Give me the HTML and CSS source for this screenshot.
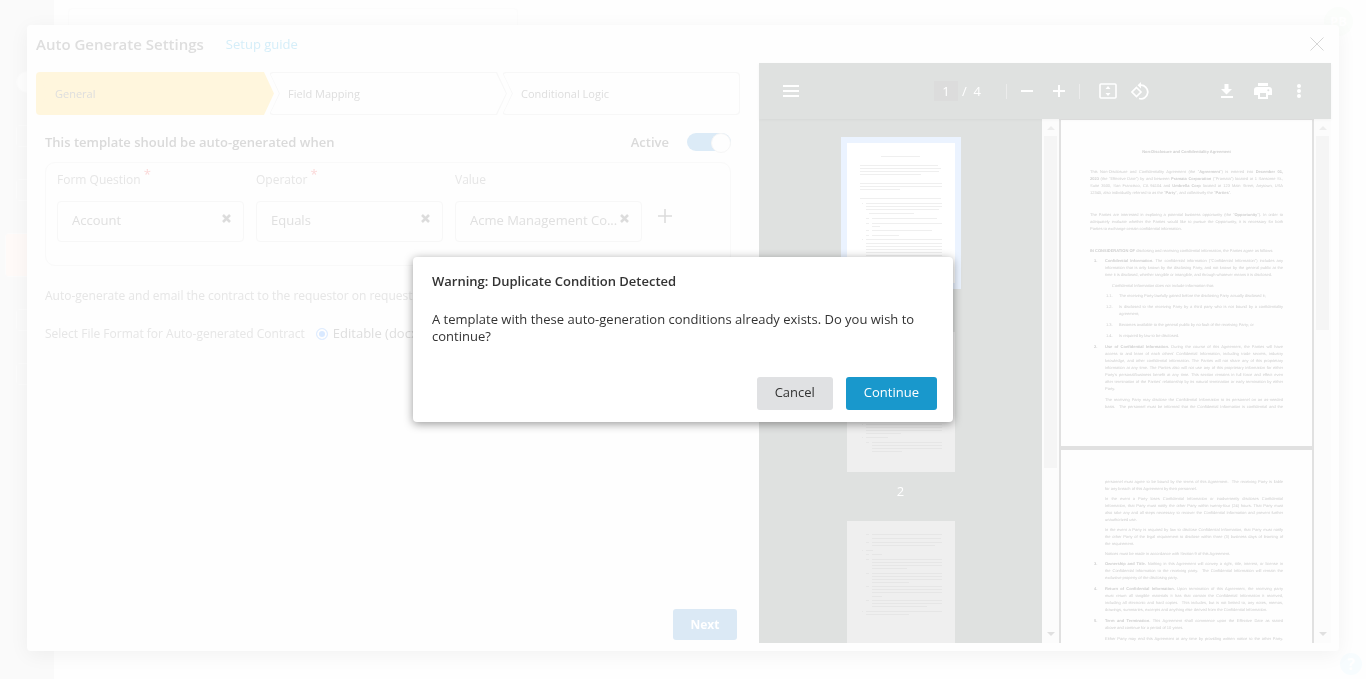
FILE: index.html
```html
<!DOCTYPE html>
<html lang="en">
<head>
    <meta charset="UTF-8">
    <meta name="viewport" content="width=device-width, initial-scale=1.0">
    <title>Auto Generate Settings</title>
    <link rel="stylesheet" href="styles.css">
</head>
<body>
    <!-- Page behind the modal -->
    <nav class="sidebar">
        <span class="side-icon round"></span>
        <span class="side-icon"></span>
        <span class="side-icon"></span>
        <span class="side-icon current"></span>
        <span class="side-icon"></span>
        <span class="side-icon"></span>
    </nav>
    <div class="search-bar"></div>
    <span class="avatar">PB</span>
    <button class="help" aria-label="Help">?</button>

    <div class="modal">
        <header class="modal-header">
            <h1>Auto Generate Settings</h1>
            <a href="#">Setup guide</a>
            <button class="close" aria-label="Close">
                <svg width="14" height="14" viewBox="0 0 14 14"><path d="M.5.5l13 13M13.5.5l-13 13" stroke="#d6d6d6" fill="none"/></svg>
            </button>
        </header>

        <div class="modal-body">
            <form class="settings" onsubmit="return false">
                <div class="steps">
                    <button type="button" class="step first active">General</button>
                    <button type="button" class="step">Field Mapping</button>
                    <button type="button" class="step last">Conditional Logic</button>
                </div>

                <div class="active-row">
                    <h2>This template should be auto-generated when</h2>
                    <label for="active">Active</label>
                    <input type="checkbox" class="toggle" id="active" checked>
                </div>

                <div class="conditions">
                    <div class="field">
                        <label for="question">Form Question <sup>*</sup></label>
                        <div class="select-box">
                            <select id="question"><option>Account</option></select>
                            <button type="button" class="clear" aria-label="Clear question"><svg width="9" height="9" viewBox="0 0 9 9"><path d="M1 1l7 7M8 1l-7 7"/></svg></button>
                        </div>
                    </div>
                    <div class="field">
                        <label for="operator">Operator <sup>*</sup></label>
                        <div class="select-box">
                            <select id="operator"><option>Equals</option></select>
                            <button type="button" class="clear" aria-label="Clear operator"><svg width="9" height="9" viewBox="0 0 9 9"><path d="M1 1l7 7M8 1l-7 7"/></svg></button>
                        </div>
                    </div>
                    <div class="field">
                        <label for="value">Value</label>
                        <div class="select-box">
                            <select id="value"><option>Acme Management Co...</option></select>
                            <button type="button" class="clear" aria-label="Clear value"><svg width="9" height="9" viewBox="0 0 9 9"><path d="M1 1l7 7M8 1l-7 7"/></svg></button>
                        </div>
                    </div>
                    <button type="button" class="add" aria-label="Add condition">
                        <svg width="14" height="14" viewBox="0 0 14 14"><path d="M7 0v14M0 7h14" stroke="#dcdcdc" stroke-width="1.6"/></svg>
                    </button>
                </div>

                <p class="option-row">Auto-generate and email the contract to the requestor on request submission</p>
                <div class="option-row format-row">
                    <span>Select File Format for Auto-generated Contract</span>
                    <input type="radio" name="format" id="docx" checked>
                    <label for="docx">Editable (docx)</label>
                </div>

                <button type="button" class="next">Next</button>
            </form>

            <section class="viewer">
                <div class="toolbar">
                    <div class="tools">
                        <button aria-label="Menu"><svg width="16" height="12" viewBox="0 0 16 12"><path d="M0 1h16M0 6h16M0 11h16" stroke="#fff" stroke-width="2"/></svg></button>
                    </div>
                    <div class="tools middle">
                        <input type="text" value="1" aria-label="Page number">
                        <span class="total">/&nbsp; 4</span>
                        <i class="sep"></i>
                        <button aria-label="Zoom out"><svg width="12" height="12" viewBox="0 0 12 12"><path d="M0 6h12" stroke="#fff" stroke-width="2"/></svg></button>
                        <button aria-label="Zoom in"><svg width="12" height="12" viewBox="0 0 12 12"><path d="M0 6h12M6 0v12" stroke="#fff" stroke-width="2"/></svg></button>
                        <i class="sep second"></i>
                        <button aria-label="Fit to page"><svg width="18" height="16" viewBox="0 0 18 16"><rect x="1" y="1" width="16" height="14" rx="1" fill="none" stroke="#fff" stroke-width="1.6"/><path d="M9 3l2.500 3h-5zM9 13l-2.500-3h5z" fill="#fff"/></svg></button>
                        <button aria-label="Rotate"><svg width="18" height="18" viewBox="0 0 18 18"><path d="M5.500 5.500l4.500 4.500-4.500 4.500L1 10z" fill="none" stroke="#fff" stroke-width="1.600"/><path d="M9.500 3.200a6.800 6.800 0 1 1-1.500 13.300" fill="none" stroke="#fff" stroke-width="1.800"/><path d="M10 0v6.500L6.500 3.200z" fill="#fff"/></svg></button>
                    </div>
                    <div class="tools right">
                        <button aria-label="Download"><svg width="14" height="16" viewBox="0 0 14 16"><path d="M4.500 1h4v5h3.500L6.500 11.500 1 6h3.500zM1 13h12v2H1z" fill="#fff"/></svg></button>
                        <button aria-label="Print"><svg width="18" height="16" viewBox="0 0 18 16"><path d="M4 0h10v3H4zM3 4h12a3 3 0 0 1 3 3v5h-4v4H4v-4H0V7a3 3 0 0 1 3-3zm3 6v4h6v-4zm9-3.500a1 1 0 1 0 0 1.500 1 1 0 0 0 0-1.500z" fill="#fff" fill-rule="evenodd"/></svg></button>
                        <button aria-label="More"><svg width="4" height="16" viewBox="0 0 4 16"><circle cx="2" cy="3" r="2" fill="#fff"/><circle cx="2" cy="8" r="2" fill="#fff"/><circle cx="2" cy="13" r="2" fill="#fff"/></svg></button>
                    </div>
                </div>

                <div class="panes">
                    <div class="thumbs">
                        <div class="thumb selected">
                            <svg viewBox="0 0 108 140"><path d="M34 13.500h39M13 22.500h78M13 25.500h81M13 28.500h79M13 31.500h61M13 40.500h82M13 43.500h82M13 46.500h40M13 55.500h81M15 60.500h1M19 60.500h76M19 63.500h76M19 66.500h73M22 70.500h45M19 75.500h3M25 75.500h65M19 80.500h3M25 80.500h70M25 83.500h8M19 87.500h3M25 87.500h60M19 92.500h3M25 92.500h27M15 96.500h1M19 96.500h76M19 100.500h76M19 103.500h76M19 106.500h76M19 109.500h76M19 112.500h76"/></svg>
                            <span>1</span>
                        </div>
                        <div class="thumb">
                            <svg viewBox="0 0 108 140"><path d="M15 92.500h1M19 92.500h76M19 95.500h76M19 98.500h76M19 101.500h35M15 105.500h1M19 105.500h22M19 110.500h3M25 110.500h70M25 113.500h70M25 116.500h70M25 119.500h30"/></svg>
                            <span>2</span>
                        </div>
                        <div class="thumb">
                            <svg viewBox="0 0 108 140"><path d="M19 13.500h3M25 13.500h70M25 17.500h69M19 21.500h3M25 21.500h70M25 24.500h63M15 29.500h1M19 29.500h7M19 33.500h3M25 33.500h10M19 38.500h3M25 38.500h70M25 41.500h70M25 44.500h70M25 47.500h35M19 52.500h3M25 52.500h70M25 55.500h70M25 58.500h70M25 61.500h37M19 65.500h3M25 65.500h70M25 68.500h70M25 71.500h70M25 75.500h10M19 79.500h3M25 79.500h70M25 82.500h70M25 85.500h55M15 90.500h1M19 90.500h76M19 93.500h43"/></svg>
                        </div>
                    </div>
                    <div class="scrollbar long"><i class="up"></i><i class="grip"></i><i class="down"></i></div>

                    <div class="pages">
                        <article class="page">
                            <h3>Non-Disclosure and Confidentiality Agreement</h3>
                            <p class="intro">
                                <span class="line">This Non-Disclosure and Confidentiality Agreement (the "<b>Agreement</b>") is entered into <b>December 01,</b></span>
                                <span class="line">
                                    <b>2023</b> (the "Effective Date") by and between <b>Pramata Corporation</b> ("Pramata") located at 1 Sansome St.,</span>
                                <span class="line">Suite 3500, San Francisco, CA 94104 and <b>Umbrella Corp</b> located at 123 Main Street, Anytown, USA</span>
                                12345, also individually referred to as the "<b>Party</b>", and collectively the "<b>Parties</b>".
                            </p>
                            <p class="intro">
                                <span class="line">The Parties are interested in exploring a potential business opportunity (the "<b>Opportunity</b>"). In order to</span>
                                <span class="line">adequately evaluate whether the Parties would like to pursue the Opportunity, it is necessary for both</span>
                                Parties to exchange certain confidential information.
                            </p>
                            <p class="lead"><b>IN CONSIDERATION OF</b> disclosing and receiving confidential information, the Parties agree as follows:</p>
                            <div class="clause"><b>1.</b><p>
                                <span class="line"><b>Confidential Information.</b> The confidential information ("Confidential Information") includes any</span>
                                <span class="line">information that is only known by the disclosing Party, and not known by the general public at the</span>
                                time it is disclosed, whether tangible or intangible, and through whatever means it is disclosed.
                            </p></div>
                            <p class="note">Confidential Information does not include information that:</p>
                            <div class="clause sub"><b>1.1.</b><p>The receiving Party lawfully gained before the disclosing Party actually disclosed it;</p></div>
                            <div class="clause sub"><b>1.2.</b><p>
                                <span class="line">Is disclosed to the receiving Party by a third party who is not bound by a confidentiality</span>
                                agreement;
                            </p></div>
                            <div class="clause sub"><b>1.3.</b><p>Becomes available to the general public by no fault of the receiving Party; or</p></div>
                            <div class="clause sub"><b>1.4.</b><p>Is required by law to be disclosed.</p></div>
                            <div class="clause"><b>2.</b><p>
                                <span class="line"><b>Use of Confidential Information.</b> During the course of this Agreement, the Parties will have</span>
                                <span class="line">access to and learn of each others' Confidential Information, including trade secrets, industry</span>
                                <span class="line">knowledge, and other confidential information. The Parties will not share any of this proprietary</span>
                                <span class="line">information at any time. The Parties also will not use any of this proprietary information for either</span>
                                <span class="line">Party's personal/business benefit at any time. This section remains in full force and effect even</span>
                                <span class="line">after termination of the Parties' relationship by its natural termination or early termination by either</span>
                                Party.
                            </p></div>
                            <p class="inner">
                                <span class="line">The receiving Party may disclose the Confidential Information to its personnel on an as-needed</span>
                                <span class="line">basis. &nbsp;The personnel must be informed that the Confidential Information is confidential and the</span>
                            </p>
                        </article>
                        <article class="page">
                            <p class="inner">
                                <span class="line">personnel must agree to be bound by the terms of this Agreement. &nbsp;The receiving Party is liable</span>
                                for any breach of this Agreement by their personnel.
                            </p>
                            <p class="inner">
                                <span class="line">In the event a Party loses Confidential Information or inadvertently discloses Confidential</span>
                                <span class="line">Information, that Party must notify the other Party within twenty-four (24) hours. That Party must</span>
                                <span class="line">also take any and all steps necessary to recover the Confidential Information and prevent further</span>
                                unauthorized use.
                            </p>
                            <p class="inner">
                                <span class="line">In the event a Party is required by law to disclose Confidential Information, that Party must notify</span>
                                <span class="line">the other Party of the legal requirement to disclose within three (3) business days of learning of</span>
                                the requirement.
                            </p>
                            <p class="inner">Notices must be made in accordance with Section 9 of this Agreement.</p>
                            <div class="clause"><b>3.</b><p>
                                <span class="line"><b>Ownership and Title.</b> Nothing in this Agreement will convey a right, title, interest, or license in</span>
                                <span class="line">the Confidential Information to the receiving party. &nbsp;The Confidential Information will remain the</span>
                                exclusive property of the disclosing party.
                            </p></div>
                            <div class="clause"><b>4.</b><p>
                                <span class="line"><b>Return of Confidential Information.</b> Upon termination of this Agreement, the receiving party</span>
                                <span class="line">must return all tangible materials it has that contain the Confidential Information it received,</span>
                                <span class="line">including all electronic and hard copies. &nbsp;This includes, but is not limited to, any notes, memos,</span>
                                drawings, summaries, excerpts and anything else derived from the Confidential Information.
                            </p></div>
                            <div class="clause"><b>5.</b><p>
                                <span class="line"><b>Term and Termination.</b> This Agreement shall commence upon the Effective Date as stated</span>
                                above and continue for a period of 10 years.
                            </p></div>
                            <p class="inner"><span class="line">Either Party may end this Agreement at any time by providing written notice to the other Party.</span></p>
                        </article>
                    </div>
                    <div class="scrollbar"><i class="up"></i><i class="grip"></i><i class="down"></i></div>
                </div>
            </section>
        </div>
    </div>

    <div class="overlay">
        <div class="dialog" role="alertdialog" aria-labelledby="warn-title">
            <h2 id="warn-title">Warning: Duplicate Condition Detected</h2>
            <p>A template with these auto-generation conditions already exists. Do you wish to continue?</p>
            <div class="dialog-buttons">
                <button class="cancel">Cancel</button>
                <button class="continue">Continue</button>
            </div>
        </div>
    </div>
</body>
</html>
```

FILE: styles.css
```css
* {
    box-sizing: border-box;
}

body {
    margin: 0;
    height: 100vh;
    overflow: hidden;
    background: #fefefe;
    font-family: "Open Sans", "Noto Sans", sans-serif;
    font-size: 13px;
    line-height: 17px;
    color: #dedede;
}

h1, h2, h3, p {
    margin: 0;
}

button, input, select {
    font: inherit;
    color: inherit;
    border: none;
    background: none;
    padding: 0;
    margin: 0;
}

button {
    cursor: pointer;
}

svg {
    display: block;
}

/* page behind */
.sidebar {
    width: 54px;
    height: 100%;
    background: #fafafa;
    padding: 71px 5px 0 16px;
    display: flex;
    flex-direction: column;
    gap: 32px;
}

.side-icon {
    width: 22px;
    height: 22px;
    border: 1px solid #fcfcfc;
    border-radius: 3px;
}

.side-icon.round {
    background: #fefefe;
    border-radius: 50%;
}

.side-icon.current {
    width: 44px;
    height: 44px;
    margin-left: -11px;
    background: #fffaf8;
}

.search-bar {
    position: absolute;
    top: 8px;
    left: 68px;
    width: 450px;
    height: 32px;
    border: 1px solid #fcfcfc;
    border-radius: 4px;
}

.avatar {
    position: absolute;
    top: 7px;
    right: 13px;
    width: 29px;
    height: 29px;
    border-radius: 50%;
    background: #fbfdfb;
    color: #fff;
    font-weight: bold;
    line-height: 29px;
    text-align: center;
}

.help {
    position: absolute;
    right: 4px;
    bottom: 4px;
    width: 22px;
    height: 22px;
    border-radius: 50%;
    background: #f7fcfe;
    color: #fff;
    font-size: 16px;
    font-weight: bold;
}

/* settings modal */
.modal {
    position: fixed;
    inset: 25px 27px 28px;
    display: flex;
    flex-direction: column;
    background: #fefefe;
    border-radius: 4px;
    box-shadow: 0 4px 20px rgba(0, 0, 0, 0.05);
}

.modal-header {
    display: flex;
    align-items: center;
    height: 38px;
    padding: 0 15px 0 9px;
}

.modal-header h1 {
    font-size: 15px;
    font-weight: 600;
    margin-right: 22px;
}

.modal-header a {
    color: #d5eef9;
    text-decoration: none;
}

.close {
    margin-left: auto;
}

.modal-body {
    flex: 1;
    min-height: 0;
    display: grid;
    grid-template-columns: minmax(0, 16fr) minmax(0, 13fr);
    gap: 19px;
    padding: 0 8px 8px 9px;
}

.settings {
    display: flex;
    flex-direction: column;
    padding-top: 9px;
}

.steps {
    display: flex;
}

.step {
    position: relative;
    z-index: 0;
    flex: 1;
    height: 43px;
    padding-left: 19px;
    margin-right: -5px;
    text-align: left;
    font-size: 11px;
    border-radius: 4px;
    background: #f7f7f7;
    clip-path: polygon(0 0, calc(100% - 10px) 0, 100% 50%, calc(100% - 10px) 100%, 0 100%, 10px 50%);
}

.step::before {
    content: "";
    position: absolute;
    z-index: -1;
    inset: 1px;
    border-radius: 4px;
    background: #fefefe;
    clip-path: polygon(0 0, calc(100% - 10px) 0, 100% 50%, calc(100% - 10px) 100%, 0 100%, 10px 50%);
}

.step.first {
    clip-path: polygon(0 0, calc(100% - 10px) 0, 100% 50%, calc(100% - 10px) 100%, 0 100%);
}

.step.last {
    margin-right: 0;
    clip-path: polygon(0 0, 100% 0, 100% 100%, 0 100%, 10px 50%);
}

.step.last::before {
    clip-path: polygon(0 0, 100% 0, 100% 100%, 0 100%, 10px 50%);
}

.step.active, .step.active::before {
    background: #fff6dd;
}

.active-row {
    display: flex;
    align-items: center;
    height: 18px;
    margin: 18px 9px 11px;
    font-weight: 600;
    color: #dadada;
}

.active-row h2 {
    font-size: 13px;
    font-weight: 600;
    margin-right: auto;
}

.toggle {
    appearance: none;
    width: 44px;
    height: 18px;
    margin-left: 18px;
    border-radius: 9px;
    background: #dcebf7;
    display: flex;
    justify-content: flex-end;
}

.toggle::before {
    content: "";
    width: 18px;
    height: 18px;
    border: 1px solid #f6f6f6;
    border-radius: 50%;
    background: #fefefe;
}

.conditions {
    display: flex;
    gap: 12px;
    height: 104px;
    margin: 0 9px;
    padding: 8px 11px;
    border: 1px solid #f9f9f9;
    border-radius: 10px;
    color: #e6e6e6;
}

.field {
    flex: 0 1 187px;
}

.field label {
    display: block;
    height: 30px;
    font-size: 12px;
}

.field sup {
    color: #fbd9d9;
    font-size: 13px;
    line-height: 0;
}

.select-box {
    position: relative;
}

.select-box select {
    appearance: none;
    width: 100%;
    height: 41px;
    padding: 0 24px 2px 14px;
    border: 1px solid #f7f7f7;
    border-radius: 4px;
    color: #e0e0e0;
}

.clear {
    position: absolute;
    right: 13px;
    top: 13px;
}

.clear path {
    stroke: #dcdcdc;
    stroke-width: 2.5;
}

.add {
    align-self: flex-start;
    margin: 38px 0 0 4px;
}

.option-row {
    margin: 21px 9px 0;
    font-size: 12px;
    color: #e6e6e6;
}

.format-row {
    display: flex;
    align-items: center;
}

.format-row input {
    appearance: none;
    width: 12px;
    height: 12px;
    margin: 0 5px 0 11px;
    border: 1px solid #e0edff;
    border-radius: 50%;
    background: #d9e9ff;
    box-shadow: inset 0 0 0 2px #fefefe;
}

.format-row label {
    font-size: 13px;
    color: #dedede;
}

.next {
    align-self: flex-end;
    width: 64px;
    height: 31px;
    margin: auto 3px 3px 0;
    border-radius: 3px;
    background: #dbe9f5;
    color: #fff;
    font-size: 12px;
    font-weight: bold;
}

/* pdf viewer */
.viewer {
    display: flex;
    flex-direction: column;
    min-height: 0;
    background: #dfe1e0;
    color: #fff;
}

.toolbar {
    display: grid;
    grid-template-columns: 1fr auto 1fr;
    align-items: center;
    height: 56px;
    padding: 0 16px;
    box-shadow: 0 1px 3px rgba(0, 0, 0, 0.04);
    position: relative;
}

.tools {
    display: flex;
    align-items: center;
}

.tools button {
    width: 32px;
    height: 32px;
    display: flex;
    align-items: center;
    justify-content: center;
}

.tools input {
    width: 24px;
    height: 20px;
    background: #dcdcdc;
    text-align: center;
}

.total {
    width: 48px;
    padding-left: 4px;
}

.sep {
    width: 1px;
    height: 15px;
    margin-right: 4px;
    background: #ececec;
}

.sep.second {
    margin: 0 12px 0 4px;
}

.tools.right {
    justify-content: flex-end;
    gap: 4px;
}

.panes {
    flex: 1;
    min-height: 0;
    display: flex;
}

.thumbs {
    flex: 1;
    overflow: hidden;
    padding-top: 18px;
}

.thumb {
    width: 120px;
    height: 189px;
    margin: 0 auto;
    text-align: center;
}

.thumb svg {
    width: 120px;
    height: 152px;
    border: 6px solid transparent;
    background: #efefef content-box;
    margin-bottom: 5px;
}

.thumb path {
    stroke: #e6e6e6;
}

.thumb.selected svg {
    border-color: #ebf3ff;
    background-color: #fff;
}

.thumb.selected path {
    stroke: #efefef;
}

.scrollbar {
    flex: 0 0 17px;
    display: flex;
    flex-direction: column;
    align-items: center;
    background: #fcfcfc;
    padding: 7px 2px;
}

.scrollbar .up, .scrollbar .down {
    border: 4px solid transparent;
    border-top: none;
    border-bottom-color: #ededed;
}

.scrollbar .down {
    margin-top: auto;
    transform: rotate(180deg);
    border-bottom-color: #e0e0e0;
}

.grip {
    width: 13px;
    height: 38%;
    margin-top: 6px;
    background: #f5f5f5;
}

.long .grip {
    height: 65%;
}

.pages {
    width: 255px;
    overflow: hidden;
    padding: 1px 2px 0;
    background: #e1e1e1;
    font-family: "Liberation Sans", Arial, sans-serif;
    font-size: 4px;
    line-height: 7px;
    color: #cfcfcf;
    text-rendering: geometricPrecision;
}

.page {
    height: 326px;
    margin-bottom: 4px;
    padding: 28px 29px 0;
    background: #fefefe;
}

/* one full, justified line of the document */
.line {
    display: block;
    white-space: nowrap;
    text-align: justify;
    text-align-last: justify;
}

.page h3 {
    font-size: 4px;
    text-align: center;
    margin-bottom: 13px;
}

.page .intro {
    margin-bottom: 15px;
}

.page .lead {
    margin-bottom: 3px;
}

.page .inner {
    padding-left: 15px;
    margin-bottom: 3px;
}

.page .note {
    padding-left: 22px;
    margin-bottom: 3px;
}

.clause {
    display: flex;
    margin-bottom: 4px;
    padding-left: 4px;
}

.clause > b {
    flex: 0 0 11px;
}

.clause p {
    flex: 1;
}

.clause.sub {
    padding-left: 16px;
}

.clause.sub > b {
    flex-basis: 13px;
    font-weight: normal;
}

/* warning dialog */
.overlay {
    position: fixed;
    inset: 0;
    display: flex;
    align-items: center;
    justify-content: center;
}

.dialog {
    width: 540px;
    padding: 16px 16px 12px 19px;
    border-radius: 4px;
    background: #fff;
    box-shadow: 0 2px 10px rgba(0, 0, 0, 0.4);
    color: #333;
}

.dialog h2 {
    font-size: 13px;
    font-weight: 600;
    margin-bottom: 21px;
}

.dialog-buttons {
    display: flex;
    justify-content: flex-end;
    gap: 13px;
    margin-top: 32px;
}

.dialog-buttons button {
    height: 33px;
    padding: 0 18px 2px;
    border-radius: 3px;
}

.cancel {
    background: #e0e1e3;
}

.continue {
    background: #1998cc;
    color: #fff;
    font-weight: 500;
}
```
